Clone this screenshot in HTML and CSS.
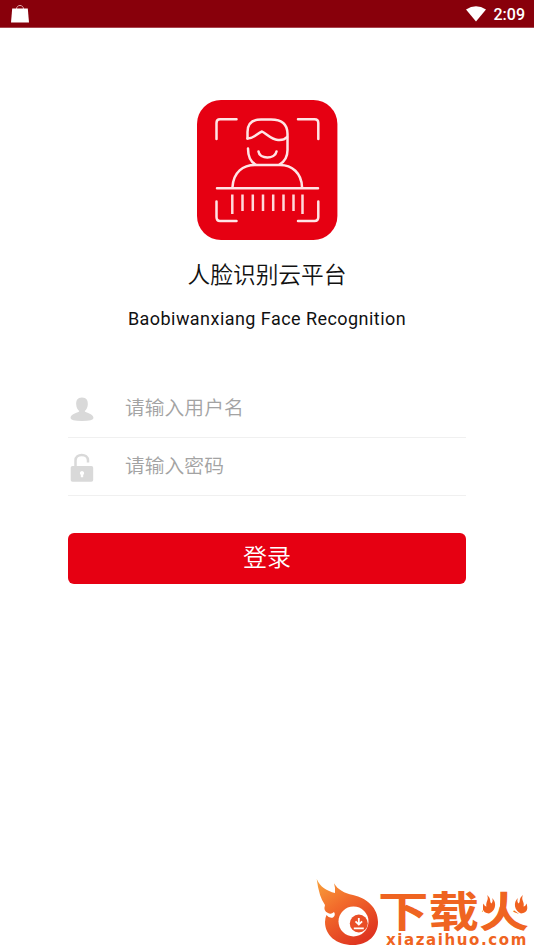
FILE: index.html
```html
<!DOCTYPE html>
<html lang="zh-CN">
<head>
<meta charset="utf-8">
<title>人脸识别云平台</title>
<link rel="stylesheet" href="styles.css">
</head>
<body>
<header class="status-bar">
  <svg class="bag" width="20" height="20" viewBox="0 0 20 20"><path d="M6.500 5C6.500 .3 13.500 .3 13.500 5" fill="none" stroke="#e3a9ad" stroke-width="1"/><path d="M2.200 4.500H17.800L19 18.500H1Z" fill="#fff"/></svg>
  <div class="status-right">
    <svg width="20" height="16" viewBox="0 0 20 16"><path d="M0 3.600Q10-3.200 20 3.600L10 15.500Z" fill="#fff"/></svg>
    <span class="clock">2:09</span>
  </div>
</header>
<main class="login">
  <svg class="logo" width="142" height="142" viewBox="6 5 142 142">
    <rect x="7" y="6" width="140.400" height="140" rx="24" fill="#e60012"/>
    <g fill="none" stroke="#ffe5e6" stroke-width="2.500" stroke-linecap="round" stroke-linejoin="round">
      <path d="M26.500 45V29Q26.500 25.300 30 25.300H46.500M108 25.300H124.500Q128.300 25.300 128.300 29V45M26.500 107.500V123Q26.500 127 30 127H46.500M108 127H124.500Q128.300 127 128.300 123V107.500"/>
      <path d="M57.500 44.500V38Q57.500 25.500 71 25.500H81Q97.500 25.500 97.500 40V56Q97.500 66 89.500 70.500M58 54.500C58 62 60 67.500 65.500 70.500"/>
      <path d="M57.500 44.500C64 44.500 67 39.500 72 37.500C77 40 81 45.500 88 46Q94 46.500 97 43M68.500 57.500C69.500 65.500 85 65.500 86.500 57.500"/>
      <path d="M42.500 93C43.500 78 53 71 65 71H90C102 71 111.500 79 112 93M27 94.300H128"/>
    </g>
    <path d="M42.300 100.500V120M52.500 100.500V117M62.800 100.500V117M73 100.500V117M83.200 100.500V117M93.500 100.500V117M103.500 100.500V117M112.500 100.500V120" stroke="#ffd9db" stroke-width="2.500"/>
  </svg>
  <h1 class="title">人脸识别云平台</h1>
  <p class="subtitle">Baobiwanxiang Face Recognition</p>
  <form class="form">
    <label class="field">
      <svg width="28" height="28" viewBox="0 0 28 28" fill="#d9d9d9"><path d="M14 2.500C9.300 2.500 8 5.500 8.200 9.500C8.400 12.600 9.700 14.800 11.300 16C11 18 2.500 18.200 2.500 23Q2.500 26 14 26Q25.500 26 25.500 23C25.500 18.200 17 18 16.700 16C18.300 14.800 19.600 12.600 19.800 9.500C20 5.500 18.700 2.500 14 2.500Z"/></svg>
      <input class="input" type="text" placeholder="请输入用户名">
    </label>
    <label class="field">
      <svg width="28" height="30" viewBox="0 0 28 30"><path d="M7.500 14V8.500C7.500 1 20 1 20 8.500V10.500" fill="none" stroke="#d9d9d9" stroke-width="2.500"/><rect x="2.700" y="14" width="22.500" height="15.800" rx="1.800" fill="#d9d9d9"/><path d="M14 19a2.200 2.200 0 0 1 1.200 4V25.200H12.800V23A2.200 2.200 0 0 1 14 19Z" fill="#fff"/></svg>
      <input class="input" type="password" placeholder="请输入密码">
    </label>
    <button class="submit" type="button">登录</button>
  </form>
</main>
<aside class="watermark">
  <svg class="flame" width="63" height="69" viewBox="0 0 63 69">
    <defs><linearGradient id="fire" x1="0" y1="0" x2=".65" y2="1"><stop offset="0" stop-color="#f8a23c"/><stop offset=".45" stop-color="#f26a2b"/><stop offset="1" stop-color="#df3520"/></linearGradient></defs>
    <path d="M.7 0C4 8 11 12 19 14Q19.500 9 18 4.300C22 11 28 14 37 16C51 19 62 29 62 43C62 56 52 66 37 66C20 66 9 56 9 43Q9 39 10.500 36Q13 39.500 17 38.500Q20 36 18 33Q15 36 12 34Q7 32 9 26Q3 18 .7 0Z" fill="url(#fire)"/>
    <circle cx="37.500" cy="42.500" r="15" fill="#fff"/>
    <circle cx="42.800" cy="44.500" r="9" fill="#e94e26"/>
    <path d="M42.800 39V45M39.500 42.300L42.800 45.600L46.100 42.300M37.800 49.300H47.800" fill="none" stroke="#fff" stroke-width="1.800"/>
  </svg>
  <div class="brand">
    <div class="brand-name">下载火</div>
    <div class="brand-url">xiazaihuo.com</div>
    <svg class="sparks" width="46" height="24" viewBox="0 0 46 24"><path d="M0 0H17V15L12 23H0ZM28 0H46V23H36L28 17Z" fill="#fff"/><g fill="#f0611f"><path d="M4 4C9 8 6 11 8.500 12.500Q10.500 10 9 7C14 11 13 20 6 22.500C-1 22-1 17 .5 12.500Q1.500 15.500 3.500 15.500C2 11 6.500 9 4 4Z"/><path d="M40 4C35 8 38 11 35.500 12.500Q33.500 10 35 7C30 11 31 20 38 22.500C45 22 45 17 43.500 12.500Q42.500 15.500 40.500 15.500C42 11 37.500 9 40 4Z"/></g></svg>
  </div>
</aside>
</body>
</html>
```
FILE: styles.css
```css
* { box-sizing: border-box; }
body {
  margin: 0;
  height: 949px;
  position: relative;
  overflow: hidden;
  background: #fff;
  color: #111;
  font-family: Roboto, "Noto Sans CJK SC", sans-serif;
}
svg { display: block; flex: none; }
.status-bar {
  height: 28px;
  padding: 0 9px 0 10px;
  display: flex;
  align-items: center;
  justify-content: space-between;
  background: #88000b;
  border-bottom: 1px solid #a84650;
}
.bag { align-self: flex-start; margin-top: 4px; }
.status-right { display: flex; align-items: center; gap: 8px; }
.clock { color: #fff; font-size: 16px; font-weight: 500; line-height: 26px; padding-top: 2px; }
.login {
  padding: 71px 68px 0;
  display: flex;
  flex-direction: column;
  align-items: center;
}
.title {
  margin: 16px 0 0;
  font-family: "Noto Sans CJK SC", sans-serif;
  font-size: 22.7px;
  font-weight: 350;
  line-height: 34px;
}
.subtitle {
  margin: 16px 0 0;
  font-size: 18px;
  line-height: 24px;
  letter-spacing: 0.45px;
  white-space: nowrap;
}
.form { width: 100%; margin-top: 49px; }
.field {
  height: 58px;
  padding-top: 1px;
  display: flex;
  align-items: center;
  gap: 29px;
  border-bottom: 1px solid #f0f0f0;
}
.input {
  flex: 1;
  min-width: 0;
  height: 40px;
  margin-top: -5px;
  padding: 0;
  border: 0;
  outline: 0;
  background: none;
  font: 350 19.8px/40px "Noto Sans CJK SC", sans-serif;
}
.input::placeholder { color: #a3a3a3; opacity: 1; }
.submit {
  display: block;
  width: 100%;
  height: 51px;
  margin-top: 37px;
  padding: 0 0 6px;
  border: 0;
  border-radius: 6px;
  background: #e60012;
  color: #fff;
  font: 350 24px/45px "Noto Sans CJK SC", sans-serif;
}
.watermark {
  position: absolute;
  left: 316px;
  top: 879px;
  width: 218px;
  height: 70px;
  display: flex;
}
.brand { position: relative; color: #ef6421; }
.brand-name {
  margin-top: 9px;
  margin-left: -1px;
  font: 700 42px/42px "Noto Sans CJK SC", sans-serif;
  transform: scaleX(1.2);
  transform-origin: left;
  width: 126px;
}
.brand-url {
  margin-top: 3px;
  padding-left: 7px;
  font: 700 15px/15px "DejaVu Sans", sans-serif;
  letter-spacing: 1.6px;
  white-space: nowrap;
}
.sparks { position: absolute; left: 104px; top: 12px; }
```
